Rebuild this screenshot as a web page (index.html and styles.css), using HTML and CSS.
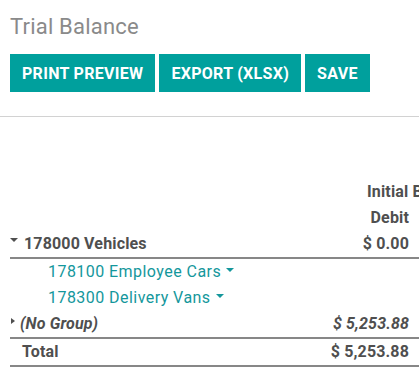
FILE: index.html
```html
<!DOCTYPE html>
<html>
<head>
<meta charset="utf-8">
<link rel="stylesheet" href="styles.css">
</head>
<body>
<div class="control-panel">
  <h1 class="title">Trial Balance</h1>
  <div class="buttons">
    <button class="btn">PRINT PREVIEW</button>
    <button class="btn">EXPORT (XLSX)</button>
    <button class="btn">SAVE</button>
  </div>
</div>
<div class="report">
  <table class="pivot">
    <colgroup>
      <col class="col-label">
      <col class="col-amt">
      <col class="col-amt">
      <col class="col-amt">
      <col class="col-amt">
    </colgroup>
    <thead>
      <tr>
        <th class="lbl"></th>
        <th class="grp" colspan="2">Initial Balance</th>
        <th class="grp" colspan="2">Current Period</th>
      </tr>
      <tr>
        <th class="lbl"></th>
        <th class="amt">Debit</th>
        <th class="amt">Credit</th>
        <th class="amt">Debit</th>
        <th class="amt">Credit</th>
      </tr>
    </thead>
    <tbody>
      <tr class="group bordered">
        <td class="lbl lvl0"><span class="caret-down"></span>178000 Vehicles</td>
        <td class="amt">$ 0.00</td>
        <td class="amt"></td>
        <td class="amt"></td>
        <td class="amt"></td>
      </tr>
      <tr class="account">
        <td class="lbl lvl1">178100 Employee Cars<span class="caret-link"></span></td>
        <td class="amt"></td><td class="amt"></td><td class="amt"></td><td class="amt"></td>
      </tr>
      <tr class="account">
        <td class="lbl lvl1">178300 Delivery Vans<span class="caret-link"></span></td>
        <td class="amt"></td><td class="amt"></td><td class="amt"></td><td class="amt"></td>
      </tr>
      <tr class="group nogroup bordered">
        <td class="lbl lvl0"><span class="caret-right"></span>(No Group)</td>
        <td class="amt">$ 5,253.88</td>
        <td class="amt"></td>
        <td class="amt"></td>
        <td class="amt"></td>
      </tr>
      <tr class="total bordered">
        <td class="lbl total-lbl">Total</td>
        <td class="amt">$ 5,253.88</td>
        <td class="amt"></td>
        <td class="amt"></td>
        <td class="amt"></td>
      </tr>
    </tbody>
  </table>
</div>
</body>
</html>
```

FILE: styles.css
```css
html, body {
  margin: 0;
  padding: 0;
  background: #ffffff;
  overflow: hidden;
}

body {
  font-family: Roboto, "Liberation Sans", sans-serif;
  color: #4f4f4f;
}

.control-panel {
  padding: 14px 10px 0 10px;
  border-bottom: 1px solid #d2d2d2;
  height: 102px;
}

.title {
  margin: 0;
  font-size: 22px;
  line-height: 26px;
  font-weight: 400;
  letter-spacing: 0.2px;
  color: #8a8a8a;
}

.buttons {
  display: flex;
  gap: 4px;
  margin-top: 14px;
}

.btn {
  height: 38px;
  padding: 0 12px;
  border: none;
  border-radius: 0;
  background: #00a09d;
  color: #ffffff;
  font-family: Roboto, "Liberation Sans", sans-serif;
  font-size: 16px;
  font-weight: 700;
  letter-spacing: 0.3px;
  cursor: pointer;
}

.report {
  overflow: hidden;
  padding: 62px 0 0 10px;
}

.pivot {
  border-collapse: separate;
  border-spacing: 0;
  table-layout: fixed;
  width: 677px;
  font-size: 16px;
  line-height: 26px;
  letter-spacing: 0.15px;
}

.col-label { width: 317px; }
.col-amt { width: 90px; }

.pivot th, .pivot td {
  padding: 0;
  white-space: nowrap;
  overflow: hidden;
  height: 26px;
}

.pivot th {
  font-weight: 700;
}

.pivot th.grp {
  text-align: left;
  padding-left: 40px;
}

.pivot .amt {
  text-align: right;
  padding-right: 8px;
}

.pivot tr.bordered td {
  border-bottom: 2px solid #878787;
}

.group td {
  font-weight: 700;
}

.nogroup td {
  font-style: italic;
}

.total td {
  font-weight: 700;
}

.lvl0 {
  padding-left: 0 !important;
}

.lvl1 {
  padding-left: 38px !important;
  color: #14979c;
  letter-spacing: 0.45px;
}

.total-lbl {
  padding-left: 12px !important;
}

.caret-down {
  display: inline-block;
  width: 0;
  height: 0;
  border-left: 4px solid transparent;
  border-right: 4px solid transparent;
  border-top: 4px solid #4f4f4f;
  margin-left: 0;
  margin-right: 6px;
  vertical-align: 7px;
}

.caret-right {
  display: inline-block;
  width: 0;
  height: 0;
  border-top: 3.5px solid transparent;
  border-bottom: 3.5px solid transparent;
  border-left: 4.5px solid #4f4f4f;
  margin-left: 1px;
  margin-right: 5px;
  vertical-align: 5px;
}

.caret-link {
  display: inline-block;
  width: 0;
  height: 0;
  border-left: 4px solid transparent;
  border-right: 4px solid transparent;
  border-top: 4px solid #14979c;
  margin-left: 5px;
  vertical-align: 5px;
}
```
